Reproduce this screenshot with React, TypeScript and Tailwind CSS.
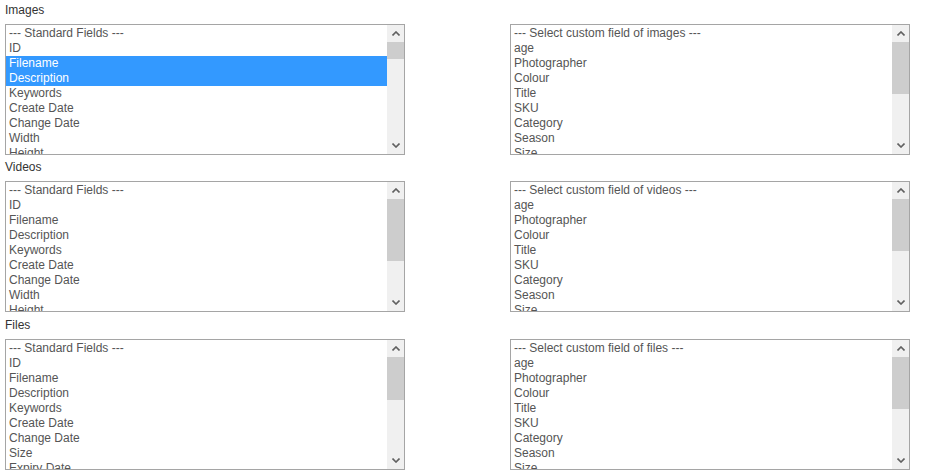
import React from 'react';

type ListProps = {
  items: string[];
  selected?: string[];
  thumbTop: number;
  thumbHeight: number;
};

const standardImages = ['--- Standard Fields ---', 'ID', 'Filename', 'Description', 'Keywords', 'Create Date', 'Change Date', 'Width', 'Height', 'Resolution'];
const standardFiles = ['--- Standard Fields ---', 'ID', 'Filename', 'Description', 'Keywords', 'Create Date', 'Change Date', 'Size', 'Expiry Date', 'Owner'];
const custom = (kind: string) => [`--- Select custom field of ${kind} ---`, 'age', 'Photographer', 'Colour', 'Title', 'SKU', 'Category', 'Season', 'Size', 'Brand'];

const Chevron: React.FC<{ up?: boolean }> = ({ up }) => (
  <svg width="8" height="5" viewBox="0 0 8 5" className="block">
    <polyline
      points={up ? '0.5,4.5 4,1 7.5,4.5' : '0.5,0.5 4,4 7.5,0.5'}
      fill="none"
      stroke="#606060"
      strokeWidth="1.6"
    />
  </svg>
);

const ListBox: React.FC<ListProps> = ({ items, selected = [], thumbTop, thumbHeight }) => (
  <div className="flex h-[131px] w-[400px] border border-[#a5a5a5] bg-white">
    <div className="flex-1 overflow-hidden pt-[1px]">
      {items.map((item) => {
        const on = selected.includes(item);
        return (
          <div
            key={item}
            className={`h-[15px] whitespace-nowrap pl-[3px] text-[12px] leading-[15px] ${
              on ? 'bg-[#3399ff] text-white' : 'text-[#555]'
            }`}
          >
            {item}
          </div>
        );
      })}
    </div>
    <div className="relative w-[17px] bg-[#f0f0f0]">
      <div className="flex h-[17px] items-center justify-center">
        <Chevron up />
      </div>
      <div
        className="absolute left-0 right-0 bg-[#cdcdcd]"
        style={{ top: thumbTop, height: thumbHeight }}
      />
      <div className="absolute bottom-0 left-0 right-0 flex h-[17px] items-center justify-center">
        <Chevron />
      </div>
    </div>
  </div>
);

const Section: React.FC<{ title: string; left: ListProps; right: ListProps; className?: string }> = ({ title, left, right, className = '' }) => (
  <div className={className}>
    <div className="mb-[6px] text-[12px] leading-[15px] text-[#333]">{title}</div>
    <div className="flex gap-[105px]">
      <ListBox {...left} />
      <ListBox {...right} />
    </div>
  </div>
);

export default function App() {
  return (
    <div
      className="flex h-[476px] w-[930px] flex-col gap-[5px] bg-white pl-[5px] pt-[3px]"
      style={{ fontFamily: '"Liberation Sans", Arial, sans-serif' }}
    >
      <Section
        title="Images"
        left={{ items: standardImages, selected: ['Filename', 'Description'], thumbTop: 17, thumbHeight: 17 }}
        right={{ items: custom('images'), thumbTop: 17, thumbHeight: 52 }}
      />
      <Section
        title="Videos"
        left={{ items: standardImages, thumbTop: 17, thumbHeight: 62 }}
        right={{ items: custom('videos'), thumbTop: 17, thumbHeight: 52 }}
      />
      <Section
        title="Files"
        className="mt-[1px]"
        left={{ items: standardFiles, thumbTop: 17, thumbHeight: 43 }}
        right={{ items: custom('files'), thumbTop: 17, thumbHeight: 52 }}
      />
    </div>
  );
}
